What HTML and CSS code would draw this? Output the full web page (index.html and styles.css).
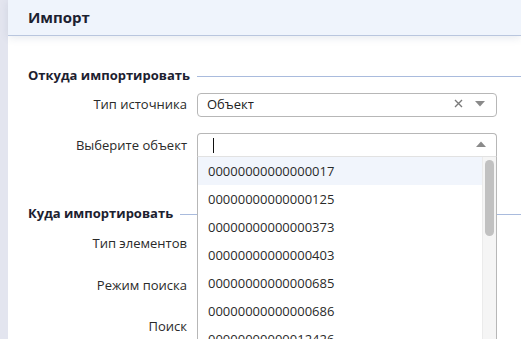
FILE: index.html
```html
<!DOCTYPE html>
<html lang="ru">
<head>
<meta charset="utf-8">
<link rel="stylesheet" href="styles.css">
</head>
<body>
<div class="strip"></div>
<div class="page">
  <header class="header"><h1 class="title">Импорт</h1></header>
  <div class="content">
    <div class="section">
      <h2 class="section-title">Откуда импортировать</h2>
      <div class="section-line"></div>
    </div>
    <div class="row row-first">
      <label class="label">Тип источника</label>
      <div class="select">
        <span class="value">Объект</span>
        <span class="clear">
          <svg width="9" height="9" viewBox="0 0 9 9"><path d="M1 1L8 8M8 1L1 8" stroke="#7a7a7a" stroke-width="1.4"/></svg>
        </span>
        <span class="arrow">
          <svg width="10" height="6" viewBox="0 0 10 6"><path d="M0 0H10L5 5.5Z" fill="#8a8a8a"/></svg>
        </span>
      </div>
    </div>
    <div class="row row-second">
      <label class="label">Выберите объект</label>
      <div class="combo">
        <div class="select select-open">
          <span class="caret"></span>
          <span class="arrow arrow-up">
            <svg width="10" height="6" viewBox="0 0 10 6"><path d="M0 6H10L5 0.5Z" fill="#8a8a8a"/></svg>
          </span>
        </div>
        <div class="dropdown">
          <ul class="options">
            <li class="option active">00000000000000017</li>
            <li class="option">00000000000000125</li>
            <li class="option">00000000000000373</li>
            <li class="option">00000000000000403</li>
            <li class="option">00000000000000685</li>
            <li class="option">00000000000000686</li>
            <li class="option">00000000000012426</li>
          </ul>
          <div class="scrollbar"><div class="thumb"></div></div>
        </div>
      </div>
    </div>
    <div class="section section-two">
      <h2 class="section-title">Куда импортировать</h2>
      <div class="section-line"></div>
    </div>
    <div class="row row-plain r1"><label class="label">Тип элементов</label></div>
    <div class="row row-plain r2"><label class="label">Режим поиска</label></div>
    <div class="row row-plain r3"><label class="label">Поиск</label></div>
  </div>
</div>
</body>
</html>
```
FILE: styles.css
```css
* { box-sizing: border-box; }
html, body { margin: 0; padding: 0; height: 100%; overflow: hidden; }
body {
  display: flex;
  font-family: "Open Sans", "Noto Sans", sans-serif;
  font-size: 13px;
  color: #222;
  background: #fff;
}
.strip {
  width: 8px;
  flex: 0 0 8px;
  background: #e3e5ef;
}
.page {
  flex: 1;
  display: flex;
  flex-direction: column;
  min-width: 0;
}
.header {
  height: 36px;
  background: #eff4fc;
  border-bottom: 1px solid #b9c6de;
  box-shadow: 0 2px 8px rgba(60, 80, 120, 0.12);
  padding-left: 20px;
  display: flex;
  align-items: center;
  position: relative;
  z-index: 1;
}
.title {
  margin: 0;
  font-size: 15px;
  font-weight: 700;
  color: #1c2130;
  padding-bottom: 1px;
}
.content {
  padding-left: 20px;
  position: relative;
}
.section {
  display: flex;
  align-items: center;
  margin-top: 30px;
  height: 18px;
}
.section-title {
  margin: 0;
  font-size: 13px;
  font-weight: 700;
  color: #1c2130;
  white-space: nowrap;
}
.section-line {
  flex: 1;
  height: 1px;
  background: #a9bbdd;
  margin-left: 7px;
  margin-top: 3px;
}
.row {
  display: flex;
  align-items: center;
}
.label {
  width: 169px;
  flex: 0 0 169px;
  text-align: right;
  color: #2a2a2a;
  padding-right: 10px;
}
.row-first { margin-top: 9px; height: 24px; }
.row-first .label { padding-bottom: 3px; }
.row-second { margin-top: 16px; height: 24px; align-items: flex-start; }
.row-second .label { line-height: 24px; }
.select {
  width: 300px;
  height: 24px;
  border: 1px solid #b7b7b7;
  border-radius: 4px;
  display: flex;
  align-items: center;
  padding-left: 9px;
  background: #fff;
}
.value { flex: 1; color: #222; padding-bottom: 3px; }
.clear { width: 9px; height: 9px; display: flex; margin-right: 12px; margin-bottom: 3px; }
.arrow { width: 10px; height: 6px; display: flex; margin-right: 11px; margin-bottom: 3px; }
.combo { position: relative; width: 300px; }
.select-open {
  border-radius: 4px 4px 0 0;
  border-bottom-color: #e2e2e2;
  justify-content: space-between;
  padding-left: 15px;
}
.caret {
  width: 1px;
  height: 15px;
  background: #111;
}
.arrow-up { margin-right: 10px; margin-bottom: 2px; }
.dropdown {
  position: absolute;
  left: 0;
  top: 24px;
  width: 300px;
  height: 200px;
  background: #fff;
  border-left: 1px solid #b7b7b7;
  border-right: 1px solid #b7b7b7;
  z-index: 5;
  display: flex;
}
.options {
  list-style: none;
  margin: 0;
  padding: 0;
  flex: 1;
}
.option {
  height: 28px;
  line-height: 28px;
  padding-left: 10px;
  color: #2a2a2a;
}
.option.active { background: #f1f5fc; }
.scrollbar {
  width: 14px;
  flex: 0 0 14px;
  background: #f5f5f5;
  border-left: 1px solid #ebebeb;
  padding: 3px 2px 0 2px;
}
.thumb {
  width: 9px;
  height: 76px;
  background: #c1c1c1;
  border-radius: 5px;
}
.section-two { margin-top: 47px; }
.row-plain { height: 20px; }
.r1 { margin-top: 11px; }
.r2 { margin-top: 22px; }
.r3 { margin-top: 21px; }
```
